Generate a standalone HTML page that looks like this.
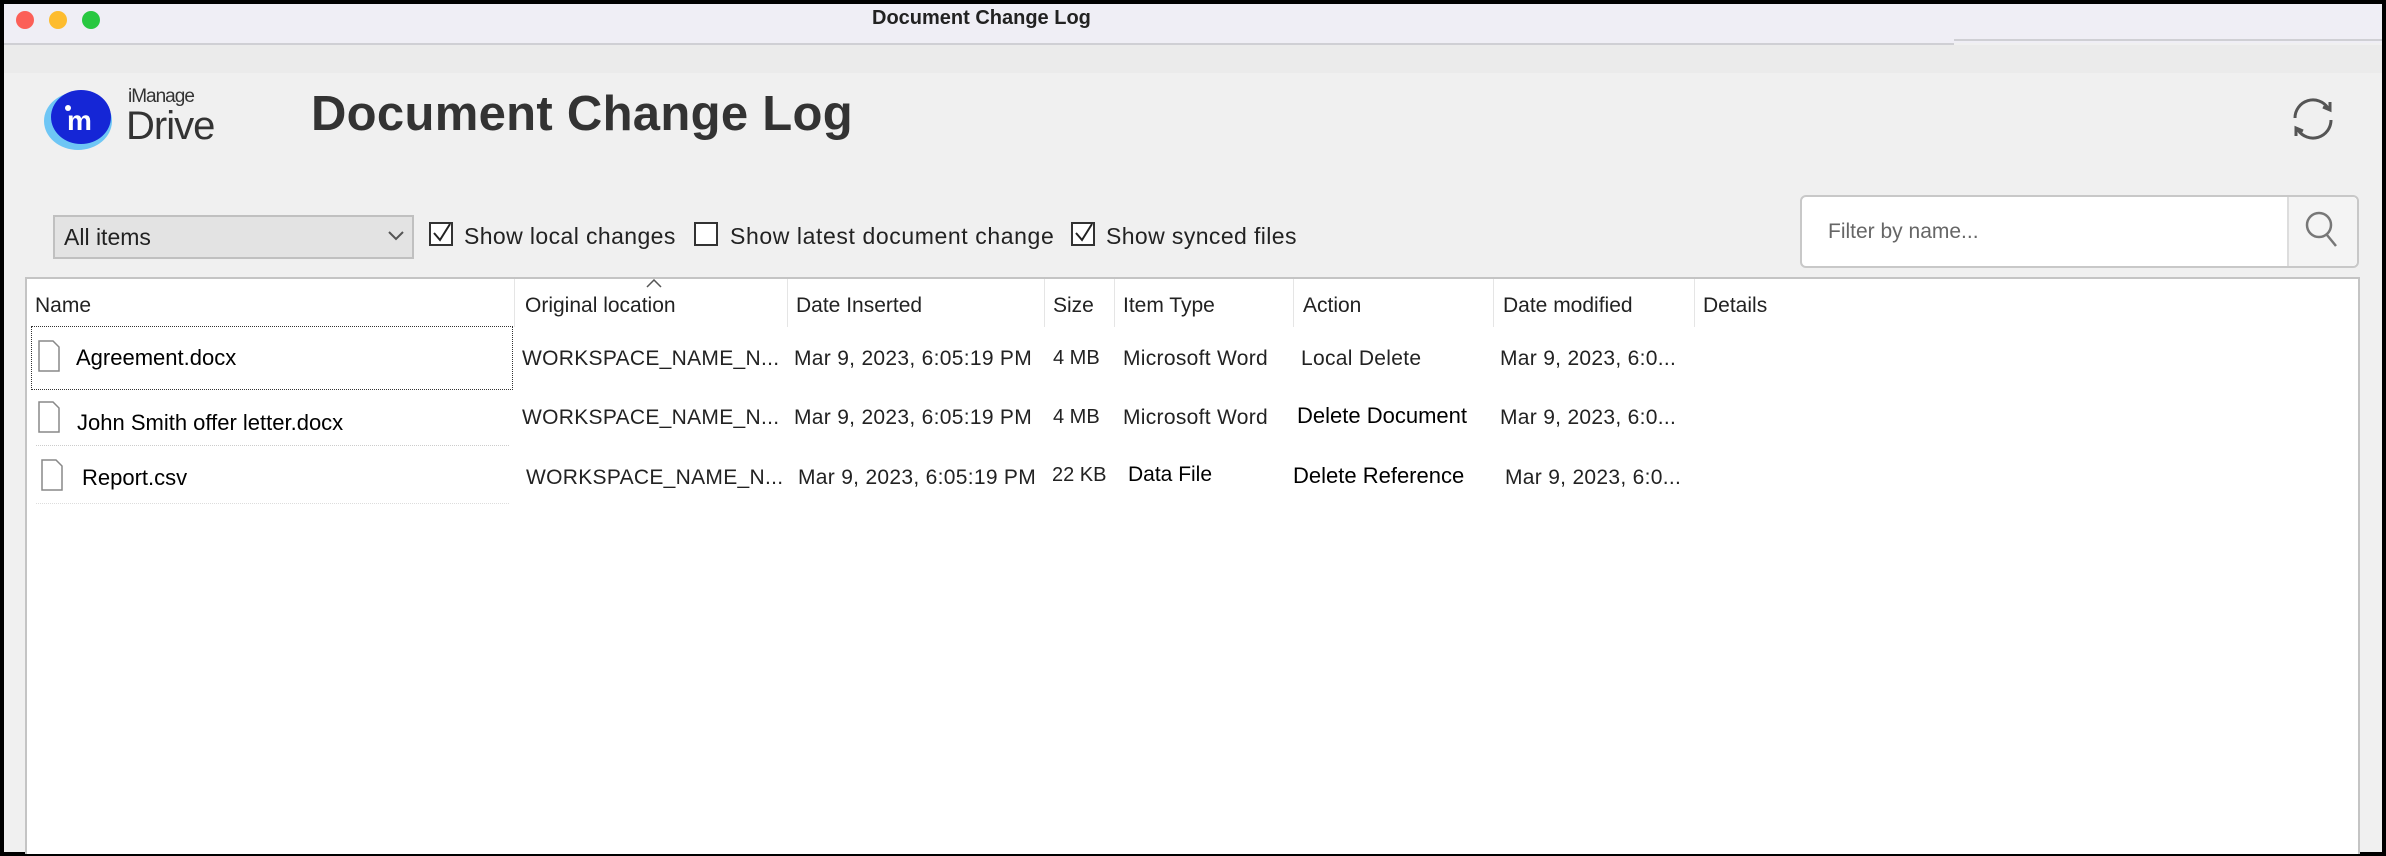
<!DOCTYPE html>
<html><head><meta charset="utf-8"><style>
*{margin:0;padding:0;box-sizing:border-box}
body{width:2386px;height:856px;background:#000;position:relative;overflow:hidden;font-family:"Liberation Sans",sans-serif}
.a{position:absolute;white-space:nowrap}
.win{position:absolute;left:4px;top:4px;width:2378px;height:848px;background:#f0f0f0}
.t{font-size:21px;color:#222;letter-spacing:0.3px}
.b{font-size:22px;color:#000}
.h{font-size:21px;color:#222}
.cb{position:absolute;width:24px;height:24px;border:2px solid #333;background:#fff}
.sep{position:absolute;top:279px;width:1px;height:48px;background:#e5e5e5}
.c{font-size:23px;color:#222}
</style></head><body>
<div class="win"></div>
<div class="a" style="left:4px;top:4px;width:2378px;height:39px;background:#efeef5"></div>
<div class="a" style="left:4px;top:43px;width:1950px;height:2px;background:#cfcfd4"></div>
<div class="a" style="left:1954px;top:39px;width:428px;height:2px;background:#cfcfd4"></div>
<div class="a" style="left:4px;top:45px;width:2378px;height:28px;background:#ebebeb"></div>
<div class="a" style="left:16px;top:11px;width:18px;height:18px;border-radius:50%;background:#fc5f57"></div>
<div class="a" style="left:49px;top:11px;width:18px;height:18px;border-radius:50%;background:#fdbc2e"></div>
<div class="a" style="left:82px;top:11px;width:18px;height:18px;border-radius:50%;background:#28c840"></div>
<div class="a" style="left:872px;top:7px;font-size:20px;font-weight:bold;color:#222">Document Change Log</div>
<svg class="a" style="left:40px;top:86px" width="82" height="66" viewBox="0 0 82 66">
<ellipse cx="38" cy="35" rx="34" ry="29" fill="#6ec6f5"/>
<ellipse cx="41" cy="31" rx="30" ry="27" fill="#1526d6"/>
<circle cx="28" cy="22" r="3" fill="#fff"/>
<text x="27" y="44" font-family="Liberation Sans" font-size="28" font-weight="bold" fill="#fff">m</text>
</svg>
<div class="a" style="left:128px;top:86px;font-size:19px;color:#333;letter-spacing:-1px">iManage</div>
<div class="a" style="left:126px;top:104px;font-size:40px;color:#333;letter-spacing:-1px">Drive</div>
<div class="a" style="left:311px;top:86px;font-size:49px;font-weight:bold;color:#333;letter-spacing:0.3px">Document Change Log</div>
<svg class="a" style="left:2288px;top:94px" width="50" height="50" viewBox="0 0 50 50" fill="none" stroke="#555" stroke-width="3">
<path d="M7 24 A18 18 0 0 1 40 14"/><path d="M43 26 A18 18 0 0 1 10 36"/>
<path d="M35 13 L42 16 L42 8" /><path d="M15 37 L8 34 L8 42"/>
</svg>
<div class="a" style="left:53px;top:215px;width:361px;height:44px;background:#e3e3e3;border:2px solid #c0c0c0"></div>
<div class="a c" style="left:64px;top:224px">All items</div>
<svg class="a" style="left:388px;top:230px" width="16" height="12"><path d="M1 2 L8 9 L15 2" stroke="#555" stroke-width="2" fill="none"/></svg>
<div class="cb" style="left:429px;top:222px"></div>
<svg class="a" style="left:431px;top:222px" width="22" height="22"><path d="M3 11 L9 18 L19 2" stroke="#222" stroke-width="2" fill="none"/></svg>
<div class="a c" style="left:464px;top:223px;letter-spacing:0.4px">Show local changes</div>
<div class="cb" style="left:694px;top:222px"></div>
<div class="a c" style="left:730px;top:223px;letter-spacing:0.6px">Show latest document change</div>
<div class="cb" style="left:1071px;top:222px"></div>
<svg class="a" style="left:1073px;top:222px" width="22" height="22"><path d="M3 11 L9 18 L19 2" stroke="#222" stroke-width="2" fill="none"/></svg>
<div class="a c" style="left:1106px;top:223px;letter-spacing:0.4px">Show synced files</div>
<div class="a" style="left:1800px;top:195px;width:559px;height:73px;background:#fff;border:2px solid #c8c8c8;border-radius:6px"></div>
<div class="a" style="left:2287px;top:197px;width:70px;height:69px;background:#f4f4f4;border-left:2px solid #ddd;border-radius:0 5px 5px 0"></div>
<div class="a" style="left:1828px;top:220px;font-size:21px;color:#666">Filter by name...</div>
<svg class="a" style="left:2304px;top:210px" width="36" height="40" fill="none" stroke="#777" stroke-width="2.5"><circle cx="15" cy="15" r="12"/><path d="M23 25 L32 36"/></svg>
<div class="a" style="left:25px;top:277px;width:2335px;height:577px;background:#fff;border:2px solid #c4c4c4;border-bottom:none"></div>
<div class="sep" style="left:514px"></div><div class="sep" style="left:787px"></div><div class="sep" style="left:1044px"></div><div class="sep" style="left:1114px"></div><div class="sep" style="left:1293px"></div><div class="sep" style="left:1493px"></div><div class="sep" style="left:1694px"></div>
<svg class="a" style="left:646px;top:279px" width="16" height="9"><path d="M1 8 L8 1 L15 8" stroke="#555" stroke-width="1.5" fill="none"/></svg>
<div class="a h" style="left:35px;top:294px">Name</div>
<div class="a h" style="left:525px;top:294px">Original location</div>
<div class="a h" style="left:796px;top:294px">Date Inserted</div>
<div class="a h" style="left:1053px;top:294px">Size</div>
<div class="a h" style="left:1123px;top:294px">Item Type</div>
<div class="a h" style="left:1303px;top:294px">Action</div>
<div class="a h" style="left:1503px;top:294px">Date modified</div>
<div class="a h" style="left:1703px;top:294px">Details</div>
<div class="a" style="left:31px;top:326px;width:482px;height:64px;border:1.5px dotted #333"></div>
<div class="a" style="left:36px;top:445px;width:473px;border-top:1px dotted #ccc"></div>
<div class="a" style="left:36px;top:503px;width:473px;border-top:1px dotted #ddd"></div>
<svg class="a" style="left:38px;top:340px" width="22" height="32"><path d="M1 1 H15 L21 7 V31 H1 Z" fill="#fff" stroke="#888" stroke-width="1.5"/></svg>
<svg class="a" style="left:38px;top:401px" width="22" height="32"><path d="M1 1 H15 L21 7 V31 H1 Z" fill="#fff" stroke="#888" stroke-width="1.5"/></svg>
<svg class="a" style="left:41px;top:459px" width="22" height="32"><path d="M1 1 H15 L21 7 V31 H1 Z" fill="#fff" stroke="#888" stroke-width="1.5"/></svg>
<div class="a b" style="left:76px;top:345px">Agreement.docx</div>
<div class="a b" style="left:77px;top:410px">John Smith offer letter.docx</div>
<div class="a b" style="left:82px;top:465px">Report.csv</div>
<div class="a t" style="left:522px;top:347px">WORKSPACE_NAME_N...</div>
<div class="a t" style="left:522px;top:406px">WORKSPACE_NAME_N...</div>
<div class="a t" style="left:526px;top:466px">WORKSPACE_NAME_N...</div>
<div class="a t" style="left:794px;top:347px">Mar 9, 2023, 6:05:19 PM</div>
<div class="a t" style="left:794px;top:406px">Mar 9, 2023, 6:05:19 PM</div>
<div class="a t" style="left:798px;top:466px">Mar 9, 2023, 6:05:19 PM</div>
<div class="a t" style="left:1053px;top:347px;font-size:20px;letter-spacing:0">4 MB</div>
<div class="a t" style="left:1053px;top:406px;font-size:20px;letter-spacing:0">4 MB</div>
<div class="a t" style="left:1052px;top:464px;font-size:20px;letter-spacing:0">22 KB</div>
<div class="a t" style="left:1123px;top:347px">Microsoft Word</div>
<div class="a t" style="left:1123px;top:406px">Microsoft Word</div>
<div class="a b" style="left:1128px;top:463px;font-size:21px">Data File</div>
<div class="a t" style="left:1301px;top:347px">Local Delete</div>
<div class="a b" style="left:1297px;top:403px;font-size:22px">Delete Document</div>
<div class="a b" style="left:1293px;top:463px;font-size:22px">Delete Reference</div>
<div class="a t" style="left:1500px;top:347px">Mar 9, 2023, 6:0...</div>
<div class="a t" style="left:1500px;top:406px">Mar 9, 2023, 6:0...</div>
<div class="a t" style="left:1505px;top:466px">Mar 9, 2023, 6:0...</div>
</body></html>
